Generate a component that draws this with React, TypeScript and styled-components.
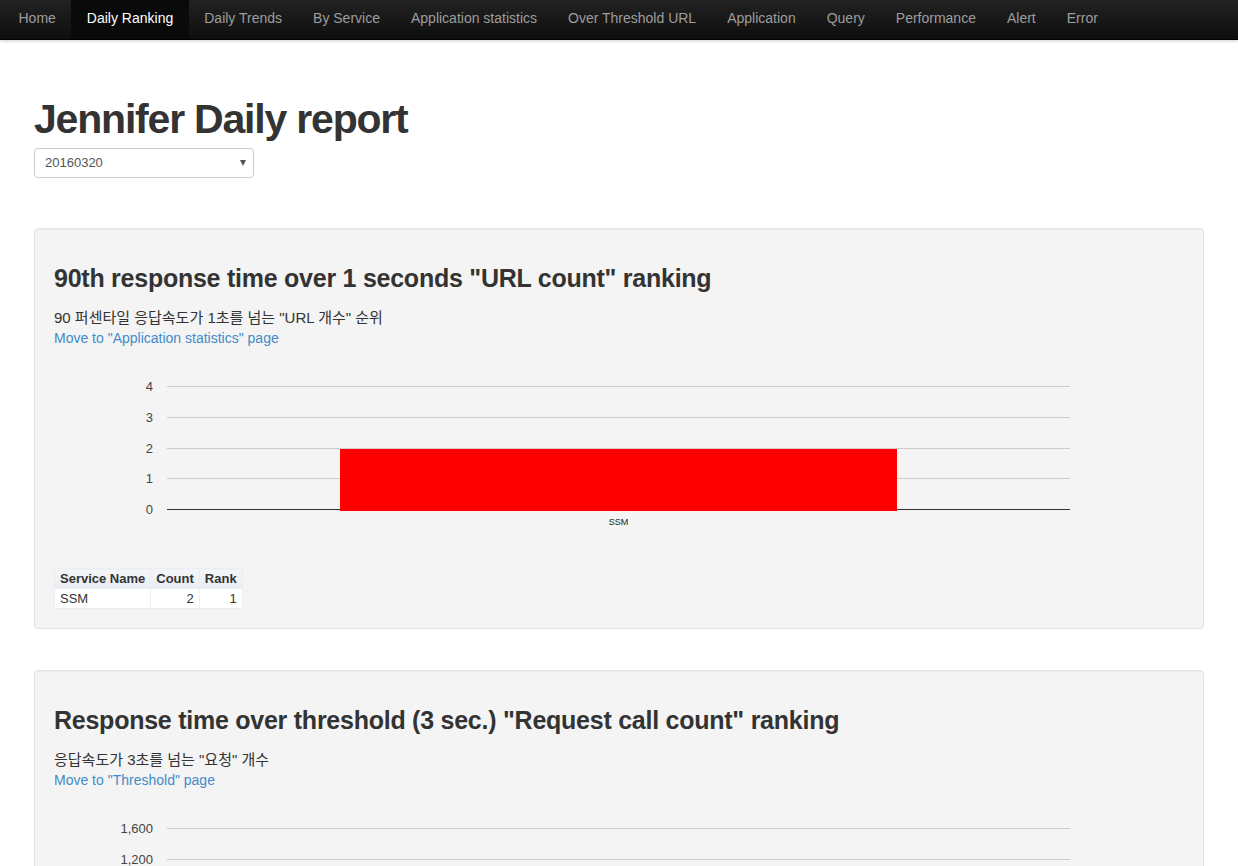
import React from "react";
import styled, { createGlobalStyle } from "styled-components";

const GlobalStyle = createGlobalStyle`
  html, body { margin: 0; padding: 0; background: #fff; }
  body {
    font-family: "Liberation Sans", Arial, "Noto Sans CJK KR", sans-serif;
    font-size: 14px;
    line-height: 20px;
    color: #333;
  }
`;

const NavBar = styled.nav`
  height: 39px;
  background: linear-gradient(to bottom, #222 0%, #0e0e0e 100%);
  border-bottom: 1px solid #000;
  box-shadow: 0 1px 3px rgba(0, 0, 0, 0.2);
  display: flex;
  padding-left: 3px;
`;

const NavItem = styled.a<{ $active?: boolean }>`
  display: flex;
  align-items: center;
  padding: 0 15.5px 3px;
  color: ${(p) => (p.$active ? "#fff" : "#9d9d9d")};
  background: ${(p) => (p.$active ? "#0a0a0a" : "transparent")};
  text-decoration: none;
  font-size: 14px;
`;

const Main = styled.main`
  width: 1170px;
  margin-left: 34px;
  padding-top: 57px;
  padding-bottom: 40px;
`;

const Title = styled.h1`
  margin: 0;
  font-size: 41px;
  line-height: 45px;
  font-weight: bold;
  color: #333;
  letter-spacing: -1.2px;
`;

const SelectBox = styled.div`
  margin-top: 6px;
  height: 28px;
  border: 1px solid #ccc;
  border-radius: 4px;
  background: #fff;
  display: flex;
  align-items: center;
  justify-content: space-between;
  padding: 0 7px 0 10px;
  box-sizing: content-box;
  width: 201px;
  font-size: 13px;
  color: #555;
`;

const Caret = styled.span`
  width: 0;
  height: 0;
  border-left: 3px solid transparent;
  border-right: 3px solid transparent;
  border-top: 6px solid #555;
`;

const Well = styled.section`
  margin-top: 50px;
  background: #f4f4f4;
  border: 1px solid #e3e3e3;
  border-radius: 4px;
  padding: 19px 19px 19px;
  box-shadow: inset 0 1px 1px rgba(0, 0, 0, 0.04);
  & + & {
    margin-top: 41px;
  }
`;

const CardTitle = styled.h3`
  margin: 17px 0 17px;
  font-size: 25px;
  line-height: 26px;
  font-weight: bold;
  color: #333;
  letter-spacing: -0.25px;
`;

const Desc = styled.p`
  margin: 0;
  font-size: 15px;
  line-height: 20px;
  color: #333;
`;

const Link = styled.a`
  display: block;
  color: #428bca;
  text-decoration: none;
  font-size: 14px;
  line-height: 20px;
`;

const ChartSvg = styled.svg`
  display: block;
  margin-top: 10px;
`;

const RankTable = styled.table`
  margin-top: 20px;
  border-collapse: collapse;
  font-size: 13px;
  line-height: 18px;
  background: #fff;
`;

const Th = styled.th`
  padding: 1px 5px 0;
  font-weight: bold;
  color: #333;
  text-align: left;
  background: linear-gradient(to bottom, #f4f6f9, #e9edf2);
  border: 1px solid #eceef1;
  white-space: nowrap;
`;

const Td = styled.td<{ $num?: boolean }>`
  padding: 1px 5px 0;
  color: #333;
  text-align: ${(p) => (p.$num ? "right" : "left")};
  border: 1px solid #eceef1;
  background: #fff;
`;

type ChartProps = {
  ticks: string[];
  bars: { label: string; value: number; x: number; w: number }[];
  max: number;
};

const Chart: React.FC<ChartProps> = ({ ticks, bars, max }) => {
  const top = 28;
  const step = 30.75;
  const n = ticks.length - 1;
  const bottom = top + step * n;
  const x0 = 113;
  const x1 = 1016;
  return (
    <ChartSvg width={1130} height={190} viewBox="0 0 1130 190">
      {ticks.map((t, i) => {
        const y = Math.round(top + step * i) + 0.5;
        return (
          <g key={t}>
            <line
              x1={x0}
              x2={x1}
              y1={y}
              y2={y}
              stroke={i === n ? "#333" : "#ccc"}
              strokeWidth={1}
            />
            <text
              x={99}
              y={y + 4.5}
              textAnchor="end"
              fontSize={13}
              fill="#444"
              fontFamily="Liberation Sans, Arial, sans-serif"
            >
              {t}
            </text>
          </g>
        );
      })}
      {bars.map((b) => {
        const h = ((bottom - top) * b.value) / max;
        return (
          <g key={b.label}>
            <rect x={b.x} y={Math.round(bottom - h) + 1} width={b.w} height={Math.round(h)} fill="#ff0000" />
            <text
              x={b.x + b.w / 2}
              y={bottom + 16}
              textAnchor="middle"
              fontSize={9}
              fill="#222"
              fontFamily="Liberation Sans, Arial, sans-serif"
            >
              {b.label}
            </text>
          </g>
        );
      })}
    </ChartSvg>
  );
};

const navItems = [
  "Home",
  "Daily Ranking",
  "Daily Trends",
  "By Service",
  "Application statistics",
  "Over Threshold URL",
  "Application",
  "Query",
  "Performance",
  "Alert",
  "Error",
];

export default function App() {
  return (
    <>
      <GlobalStyle />
      <NavBar>
        {navItems.map((item) => (
          <NavItem key={item} href="#" $active={item === "Daily Ranking"}>
            {item}
          </NavItem>
        ))}
      </NavBar>
      <Main>
        <Title>Jennifer Daily report</Title>
        <SelectBox>
          <span>20160320</span>
          <Caret />
        </SelectBox>

        <Well>
          <CardTitle>90th response time over 1 seconds "URL count" ranking</CardTitle>
          <Desc>90 퍼센타일 응답속도가 1초를 넘는 "URL 개수" 순위</Desc>
          <Link href="#">Move to "Application statistics" page</Link>
          <Chart
            ticks={["4", "3", "2", "1", "0"]}
            max={4}
            bars={[{ label: "SSM", value: 2, x: 286, w: 557 }]}
          />
          <RankTable>
            <thead>
              <tr>
                <Th>Service Name</Th>
                <Th>Count</Th>
                <Th>Rank</Th>
              </tr>
            </thead>
            <tbody>
              <tr>
                <Td>SSM</Td>
                <Td $num>2</Td>
                <Td $num>1</Td>
              </tr>
            </tbody>
          </RankTable>
        </Well>

        <Well>
          <CardTitle>Response time over threshold (3 sec.) "Request call count" ranking</CardTitle>
          <Desc>응답속도가 3초를 넘는 "요청" 개수</Desc>
          <Link href="#">Move to "Threshold" page</Link>
          <Chart
            ticks={["1,600", "1,200", "800", "400", "0"]}
            max={1600}
            bars={[{ label: "SSM", value: 880, x: 286, w: 557 }]}
          />
        </Well>
      </Main>
    </>
  );
}
